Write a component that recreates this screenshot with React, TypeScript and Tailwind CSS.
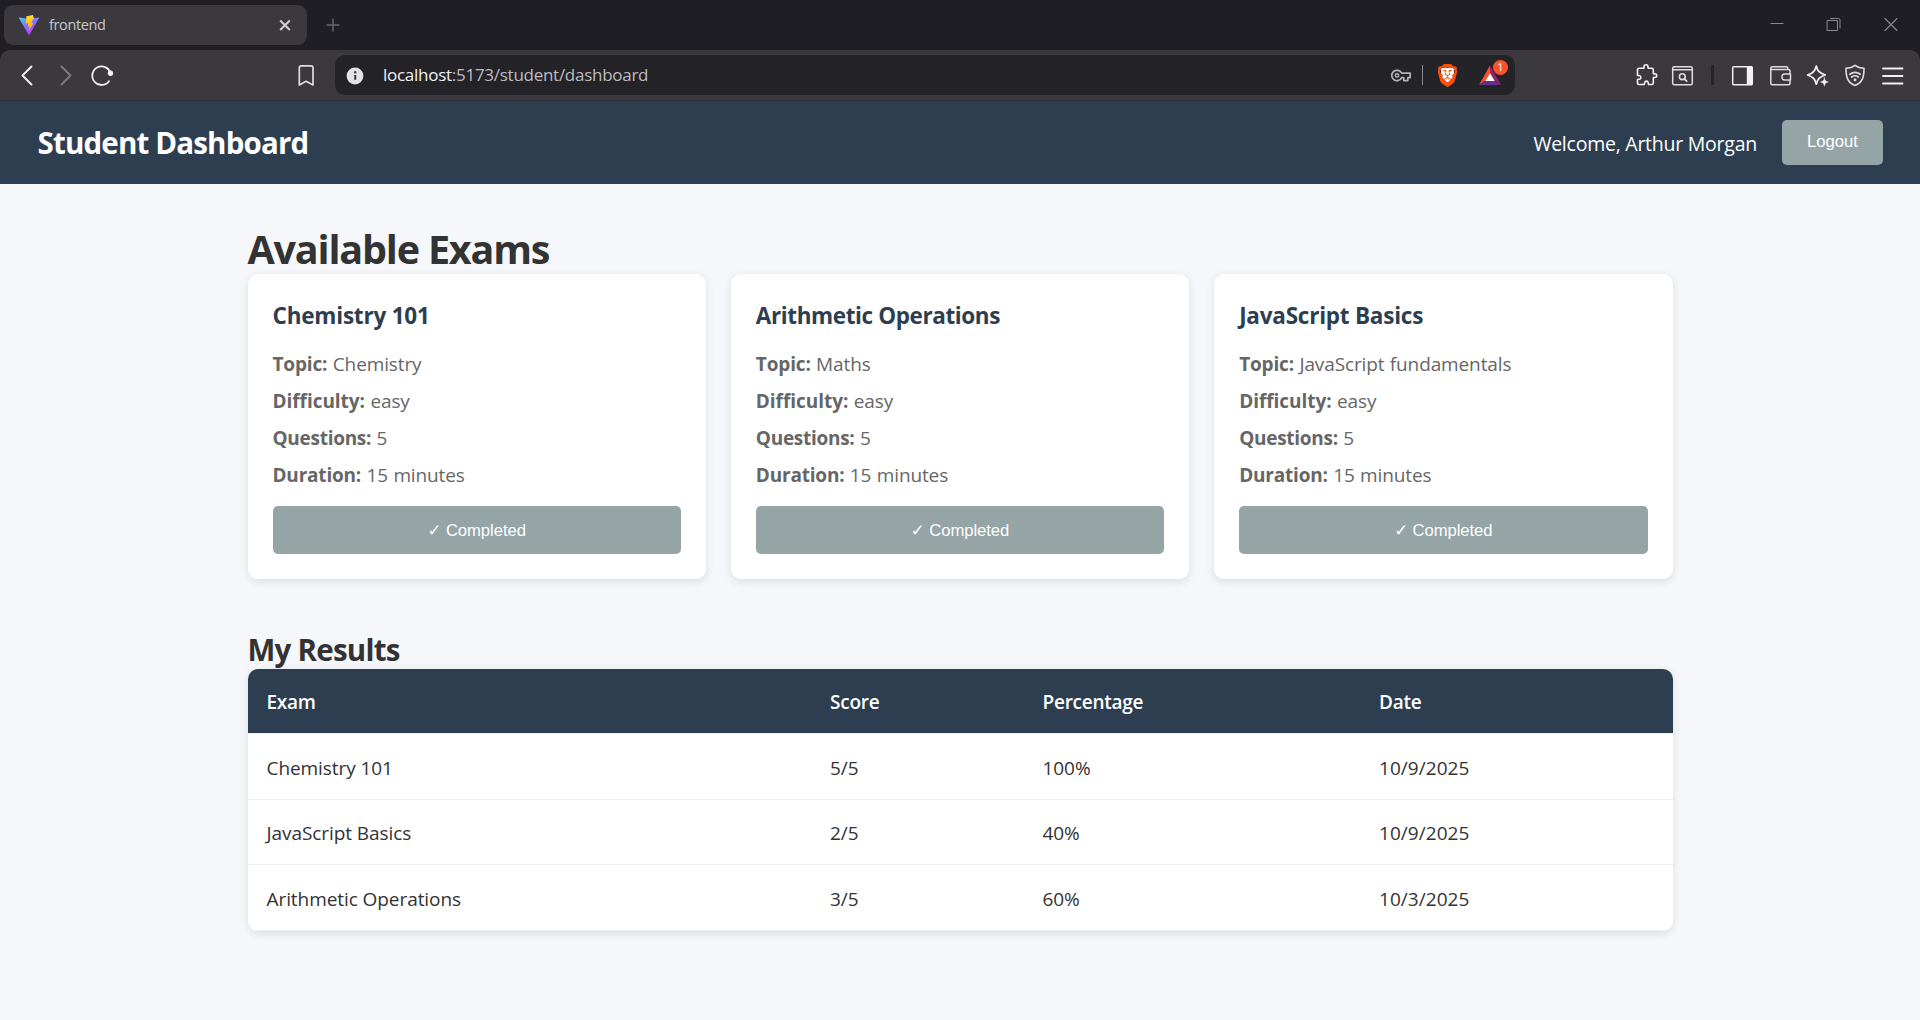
import type { ReactNode } from "react";
import { SiBrave } from "react-icons/si";

function Icon({ children, className = "" }: { children: ReactNode; className?: string }) {
  return (
    <svg
      width="24"
      height="24"
      viewBox="0 0 24 24"
      fill="none"
      stroke="currentColor"
      strokeWidth="1.6"
      strokeLinecap="round"
      strokeLinejoin="round"
      className={"shrink-0 " + className}
    >
      {children}
    </svg>
  );
}

function TabStrip() {
  return (
    <div className="flex h-[50px] items-center bg-[#1f1e24] pl-1">
      <div className="flex h-10 w-[303px] items-center rounded-[9px] bg-[#3b393e] pr-[10px] pl-[14px]">
        <svg width="22" height="22" viewBox="0 0 22 22" className="shrink-0">
          <defs>
            <linearGradient id="vite-body" x1="0" y1="0" x2="0.6" y2="1">
              <stop offset="0" stopColor="#41d1ff" />
              <stop offset="0.55" stopColor="#8a6bff" />
              <stop offset="1" stopColor="#bd34fe" />
            </linearGradient>
            <linearGradient id="vite-bolt" x1="0" y1="0" x2="0" y2="1">
              <stop offset="0" stopColor="#ffdd35" />
              <stop offset="1" stopColor="#ffa800" />
            </linearGradient>
          </defs>
          <path d="M1.4 3.4 11 5 20.6 3.4c.4-.1.7.3.5.7L11.5 20.7c-.2.4-.8.4-1 0L.9 4.1c-.2-.4.1-.8.5-.7Z" fill="url(#vite-body)" />
          <path d="M14.9 1 8.4 2.2 7.8 9.6l2.6-.5-.6 3.6 1.8-.5-1 5 5-8.3-2.4.5 1.7-4.4h1.3z" fill="url(#vite-bolt)" />
        </svg>
        <span className="ml-[9px] text-[14.5px] leading-5 tracking-[-0.36px] text-[#c9c8cc]">frontend</span>
        <Icon className="ml-auto text-[#d0cfd3]">
          <path d="m7.200 7.500 9.600 9.600m0-9.600-9.600 9.600" strokeWidth="2.1" strokeLinecap="butt" />
        </Icon>
      </div>
      <Icon className="ml-[14px] text-[#66656a]">
        <path d="M12 5.500v13M5.500 12h13" strokeWidth="1.5" strokeLinecap="butt" />
      </Icon>
      <div className="ml-auto flex items-center gap-[33px] pr-[17px] text-[#8a898d]">
        <Icon>
          <path d="M5.5 10.500h13" strokeWidth="1" strokeLinecap="butt" />
        </Icon>
        <Icon>
          <path d="M5.500 7.500h10v10h-10zM8.500 5.500H16.500q1.500 0 1.500 1.500V15" strokeWidth="1" />
        </Icon>
        <Icon>
          <path d="m6 5.500 12 12m0-12-12 12" strokeWidth="1.100" />
        </Icon>
      </div>
    </div>
  );
}

function AddressBar() {
  return (
    <div className="ml-[17px] flex h-10 w-[1180px] items-center rounded-[10px] bg-[#242328] pr-3 pl-2">
      <Icon className="text-[#e3e2e8]">
        <circle cx="12" cy="13" r="8.400" fill="currentColor" stroke="none" />
        <path d="M12.200 12v4.800" stroke="#3b393e" strokeWidth="2" strokeLinecap="butt" />
        <circle cx="12.200" cy="9.300" r="1.200" fill="#3b393e" stroke="none" />
      </Icon>
      <span className="ml-4 text-[17px] leading-6 tracking-[-0.27px] text-[#bdbcc0]">
        <span className="text-[#f2f1f5]">localhost</span>:5173/student/dashboard
      </span>
      <div className="ml-auto flex items-center">
        <Icon className="text-[#b5b4b8]">
          <path d="M12.600 10.200a5.200 5.200 0 1 0 .1 4.400H14.800v3h4v-3h2.400v-4.400z" strokeWidth="1.700" />
          <circle cx="8" cy="12.400" r="1.700" strokeWidth="1.500" />
        </Icon>
        <div className="ml-[9px] h-5 w-px bg-[#8a898d]" />
        <div className="relative ml-[12px] flex h-6 w-[24px] items-center justify-center">
          <div className="absolute h-[15px] w-[13px] rounded-b-lg bg-white" />
          <SiBrave size={23} className="relative text-[#fb4f0c]" />
        </div>
        <div className="relative mr-px ml-[19px] h-6 w-6">
          <svg width="24" height="24" viewBox="0 0 24 24">
            <path d="M12 2.500 12 10 7.500 17.500 1 22Z" fill="#ff5024" />
            <path d="M12 2.500 23 22 16.500 17.500 12 10Z" fill="#9e1f63" />
            <path d="M1 22 7.500 17.800h9L23 22Z" fill="#662d91" />
            <path d="m12 10 4.700 8H7.300Z" fill="#fff" />
          </svg>
          <div className="absolute -top-[3px] left-[15px] flex h-[15px] w-[15px] items-center justify-center rounded-full bg-[#fb542b] text-[11px] text-white">
            1
          </div>
        </div>
      </div>
    </div>
  );
}

function Toolbar() {
  return (
    <div className="bg-[#1f1e24]">
      <div className="flex h-[51px] items-center rounded-t-[10px] border-b border-[#333135] bg-[#3b393e] px-[15px] text-[#f1f0f4]">
        <Icon>
          <path d="m16.500 3.500-9 9 9 9" strokeWidth="1.900" />
        </Icon>
        <Icon className="ml-[15px] text-[#7d7c80]">
          <path d="m7.500 3.500 9 9-9 9" strokeWidth="1.900" />
        </Icon>
        <Icon className="ml-3">
          <path d="M20.500 10A9.300 9.300 0 1 0 19 18.300" strokeWidth="1.800" />
          <circle cx="20.500" cy="10.200" r="2.700" fill="currentColor" stroke="none" />
        </Icon>
        <Icon className="ml-[180px] text-[#dddce0]">
          <path d="M5.300 22V4.800q0-2 2-2h9.700q2 0 2 2V22l-6.900-3.700z" strokeWidth="1.700" />
        </Icon>
        <AddressBar />
        <div className="ml-auto flex items-center pb-px">
          <Icon>
            <path
              d="M4.500 5.200h4.300c.5-.4.200-1 .2-1.500 0-1.200.9-1.900 2-1.900s2 .7 2 1.900c0 .5-.3 1.100.2 1.500h3.600c.9 0 1.500.6 1.500 1.500v3.800c.4.700 1.100.3 1.700.3 1 0 1.700.8 1.700 1.800s-.7 1.900-1.700 1.900c-.6 0-1.300-.4-1.700.3v5.200c0 .9-.6 1.500-1.500 1.500h-3.200c-.6-.5-.2-1.200-.4-1.900-.2-.9-.8-1.500-1.700-1.500s-1.700.6-1.900 1.500c-.1.700.1 1.400-.4 1.900H4c-.9 0-1.500-.6-1.500-1.500v-3.400c.5-.7 1.200-.2 1.900-.4.900-.2 1.500-.9 1.500-1.800s-.6-1.600-1.500-1.800c-.7-.2-1.400.3-1.900-.4V6.700c0-.9.800-1.500 2-1.500Z"
              strokeWidth="1.600"
            />
          </Icon>
          <Icon className="ml-3 text-[#dddce0]">
            <rect x="1.700" y="3.700" width="19.600" height="18" rx="1.500" strokeWidth="1.500" />
            <path d="M2 6.800h19" strokeWidth="1.400" />
            <circle cx="11.300" cy="13.700" r="2.900" strokeWidth="1.600" />
            <path d="m13.500 16 2.200 2.200" strokeWidth="1.800" />
          </Icon>
          <div className="ml-[16px] h-5 w-[3px] rounded bg-[#242328]" />
          <Icon className="ml-[17px]">
            <rect x="1.700" y="3.700" width="19.600" height="18" rx="1" strokeWidth="1.500" />
            <path d="M15.800 3.700h5.500v18h-5.500z" fill="currentColor" stroke="none" />
          </Icon>
          <Icon className="ml-[14px] text-[#dddce0]">
            <path d="M1.800 5.500v14.700q0 1.500 1.500 1.500h16.200q1.500 0 1.500-1.500V8q0-1.500-1.500-1.500H3.300q-1.500 0-1.500-1.300 0-1.500 1.500-1.500H17.500q1.300 0 1.300 1.300v1" strokeWidth="1.500" />
            <path d="M21.500 11h-6q-2.500 0-2.500 3t2.500 3h6z" strokeWidth="1.500" fill="#3b393e" />
          </Icon>
          <Icon className="ml-[13px]">
            <path d="M10.300 3c1 4.500 2.700 6.900 9 9-6 2-7.700 4.100-9 9.200C9 16.100 7.300 14 1.600 12 7.300 10 9 7.900 10.300 3Z" strokeWidth="1.700" />
            <path
              d="M18.400 14.800c.5 2.600 1 3.400 3.900 4.200-2.900.8-3.400 1.600-3.900 4.200-.5-2.600-1-3.400-3.900-4.200 2.900-.8 3.400-1.600 3.900-4.200Z"
              fill="currentColor"
              strokeWidth=".5"
            />
          </Icon>
          <Icon className="ml-[13px] text-[#dddce0]">
            <path d="M12 2.400c2.500 2 5.600 2.800 9 2.800 0 9-1.500 14.300-9 17.300-7.500-3-9-8.300-9-17.300 3.400 0 6.500-.8 9-2.800Z" strokeWidth="1.600" />
            <path d="M6.800 11.300q5.200-3.800 10.400 0M8.700 14q3.300-2.500 6.600 0" strokeWidth="1.700" />
            <circle cx="12" cy="16.700" r="1.500" fill="currentColor" stroke="none" />
          </Icon>
          <Icon className="ml-[14px]">
            <path d="M2 5.500h19.500M2 13h19.500M2 20.500h19.500" strokeWidth="1.800" />
          </Icon>
        </div>
      </div>
    </div>
  );
}

const details: { label: string; key: "topic" | "difficulty" | "questions" | "duration"; tracking: string }[] = [
  { label: "Topic:", key: "topic", tracking: "tracking-[-0.16px]" },
  { label: "Difficulty:", key: "difficulty", tracking: "tracking-[-0.04px]" },
  { label: "Questions:", key: "questions", tracking: "tracking-[-0.28px]" },
  { label: "Duration:", key: "duration", tracking: "tracking-[-0.2px]" },
];

const exams = [
  { title: "Chemistry 101", topic: "Chemistry", difficulty: "easy", questions: "5", duration: "15 minutes", tracking: "tracking-[-0.2px]" },
  { title: "Arithmetic Operations", topic: "Maths", difficulty: "easy", questions: "5", duration: "15 minutes", tracking: "tracking-[-0.39px]" },
  { title: "JavaScript Basics", topic: "JavaScript fundamentals", difficulty: "easy", questions: "5", duration: "15 minutes", tracking: "tracking-[-0.23px]" },
];

const results = [
  { exam: "Chemistry 101", score: "5/5", percentage: "100%", date: "10/9/2025", height: "h-[66px]" },
  { exam: "JavaScript Basics", score: "2/5", percentage: "40%", date: "10/9/2025", height: "h-[65px]" },
  { exam: "Arithmetic Operations", score: "3/5", percentage: "60%", date: "10/3/2025", height: "h-[66px]" },
];

const columns = "grid grid-cols-[563.5px_212.5px_336.5px_1fr] items-center *:pl-[19px]";

export default function App() {
  return (
    <div className="flex h-[1020px] w-[1920px] flex-col overflow-hidden bg-[#f5f7fa] font-['Open_Sans',sans-serif] text-[#333]">
      <TabStrip />
      <Toolbar />
      <header className="flex h-[83px] shrink-0 items-center justify-between bg-[#2c3e50] pr-[37px] pl-[37.5px] text-white">
        <h1 className="pt-px text-[29.5px] leading-10 font-bold tracking-[-0.83px]">Student Dashboard</h1>
        <div className="flex items-center gap-[25px]">
          <span className="pt-[3px] text-[19.5px] leading-7 tracking-[-0.24px]">Welcome, Arthur Morgan</span>
          <button className="h-[45px] w-[101px] rounded-[5px] bg-[#95a5a6] pb-[2px] font-['Liberation_Sans',sans-serif] text-[16.67px] leading-5">
            Logout
          </button>
        </div>
      </header>
      <main className="mx-auto w-[1425px] pt-10">
        <h2 className="text-[39.5px] leading-[51px] font-bold tracking-[-1.18px]">Available Exams</h2>
        <div className="-mt-px grid grid-cols-3 gap-[25px]">
          {exams.map((exam) => (
            <section key={exam.title} className="rounded-[10px] bg-white px-[25px] pt-[26px] pb-[25px] shadow-[0_2.5px_10px_rgba(0,0,0,0.1)]">
              <h3 className={"mb-[14px] text-[22.5px] leading-8 font-bold text-[#2c3e50] " + exam.tracking}>{exam.title}</h3>
              {details.map(({ label, key, tracking }) => (
                <p key={key} className="text-[19px] leading-[37px] tracking-[-0.12px] text-[#666] [word-spacing:0.6px]">
                  <strong className={tracking}>{label}</strong> {exam[key]}
                </p>
              ))}
              <button className="mt-3 block h-12 w-full rounded-[5px] bg-[#95a5a6] pt-px font-['Liberation_Sans','DejaVu_Sans',sans-serif] text-[16.67px] leading-5 tracking-[-0.07px] text-white">
                ✓ Completed
              </button>
            </section>
          ))}
        </div>
        <h2 className="mt-[52px] text-[29.5px] leading-[38px] font-bold tracking-[-0.75px]">My Results</h2>
        <div className="overflow-hidden rounded-[10px] bg-white text-[19px] leading-7 shadow-[0_2.5px_10px_rgba(0,0,0,0.1)]">
          <div className={"h-[65px] border-b border-[#ebeef2] bg-[#2c3e50] pt-[2px] font-semibold tracking-[-0.25px] text-white " + columns}>
            <div>Exam</div>
            <div>Score</div>
            <div>Percentage</div>
            <div>Date</div>
          </div>
          {results.map((row) => (
            <div key={row.exam} className={"border-b border-[#eee] pt-[2px] tracking-[-0.07px] " + row.height + " " + columns}>
              <div>{row.exam}</div>
              <div>{row.score}</div>
              <div>{row.percentage}</div>
              <div className="tracking-[0.05px]">{row.date}</div>
            </div>
          ))}
        </div>
      </main>
    </div>
  );
}
